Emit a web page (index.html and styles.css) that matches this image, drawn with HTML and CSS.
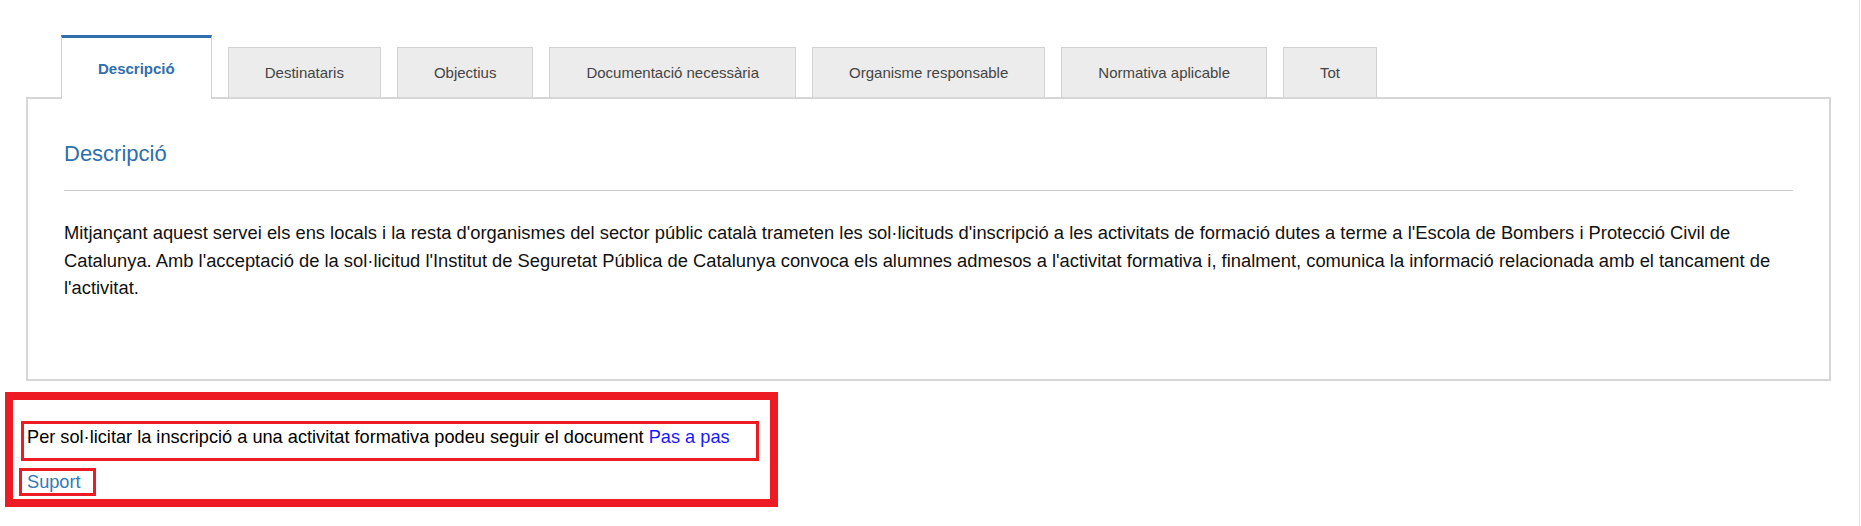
FILE: index.html
```html
<!DOCTYPE html>
<html lang="ca">
<head>
<meta charset="utf-8">
<title>Descripció</title>
<link rel="stylesheet" href="styles.css">
</head>
<body>
<div class="page">
  <section class="tabbox">
    <ul class="tabs">
      <li class="tab active">Descripció</li>
      <li class="tab">Destinataris</li>
      <li class="tab">Objectius</li>
      <li class="tab">Documentació necessària</li>
      <li class="tab">Organisme responsable</li>
      <li class="tab">Normativa aplicable</li>
      <li class="tab">Tot</li>
    </ul>
    <div class="panel">
      <h2 class="panel-title">Descripció</h2>
      <hr class="rule">
      <p class="panel-text">Mitjançant aquest servei els ens locals i la resta d'organismes del sector públic català trameten les sol·licituds d'inscripció a les activitats de formació dutes a terme a l'Escola de Bombers i Protecció Civil de Catalunya. Amb l'acceptació de la sol·licitud l'Institut de Seguretat Pública de Catalunya convoca els alumnes admesos a l'activitat formativa i, finalment, comunica la informació relacionada amb el tancament de l'activitat.</p>
    </div>
  </section>
  <div class="highlight">
    <div class="note">Per sol·licitar la inscripció a una activitat formativa podeu seguir el document <a class="link-step" href="#">Pas a pas</a></div>
    <div class="support"><a class="link-support" href="#">Suport</a></div>
  </div>
</div>
</body>
</html>
```

FILE: styles.css
```css
* {
  box-sizing: border-box;
}

html, body {
  margin: 0;
  padding: 0;
  background: #ffffff;
}

body {
  font-family: "Liberation Sans", Arial, sans-serif;
  color: #111111;
}

.page {
  width: 1860px;
  min-height: 526px;
  border-right: 1px solid #e2e2e2;
  padding-top: 35px;
}

.tabbox {
  padding-left: 26px;
}

.tabs {
  list-style: none;
  margin: 0 0 -2px 35px;
  padding: 0;
  display: flex;
  align-items: flex-end;
  gap: 16px;
  position: relative;
  z-index: 1;
}

.tab {
  height: 50px;
  margin-bottom: 2px;
  padding: 0 36px;
  display: flex;
  align-items: center;
  background: #ececec;
  border: 1px solid #d2d2d2;
  border-bottom: 0;
  font-size: 15px;
  color: #444444;
  white-space: nowrap;
}

.tab.active {
  height: 64px;
  margin-bottom: 0;
  background: #ffffff;
  border-top: 3px solid #2f6faf;
  border-left: 1px solid #d2d2d2;
  border-right: 1px solid #d2d2d2;
  color: #2f6faf;
  font-weight: bold;
}

.panel {
  margin-right: 28px;
  border: 2px solid #d6d6d6;
  padding: 0 36px 77px;
}

.panel-title {
  margin: 42px 0 0;
  font-size: 22px;
  line-height: 26px;
  font-weight: normal;
  color: #2f6faf;
}

.rule {
  margin: 23px 0 0;
  border: 0;
  border-top: 1px solid #cccccc;
  height: 0;
}

.panel-text {
  margin: 28px 0 0;
  font-size: 18.35px;
  line-height: 27.5px;
}

.highlight {
  width: 773px;
  margin: 11px 0 0 5px;
  border: 8px solid #ed1c24;
  padding: 21px 6px 3px;
  font-size: 18.2px;
}

.note {
  display: inline-block;
  margin-left: 2px;
  border: 3px solid #ed1c24;
  padding: 0 26px 7px 3px;
  line-height: 27.5px;
  color: #000000;
}

.support {
  margin-top: 7px;
}

.support .link-support {
  display: inline-block;
  border: 3px solid #ed1c24;
  padding: 2px 12px 2px 5px;
  line-height: 18px;
}

.link-step {
  color: #1a1aff;
  text-decoration: none;
}

.link-support {
  color: #337ab7;
  text-decoration: none;
}
```
